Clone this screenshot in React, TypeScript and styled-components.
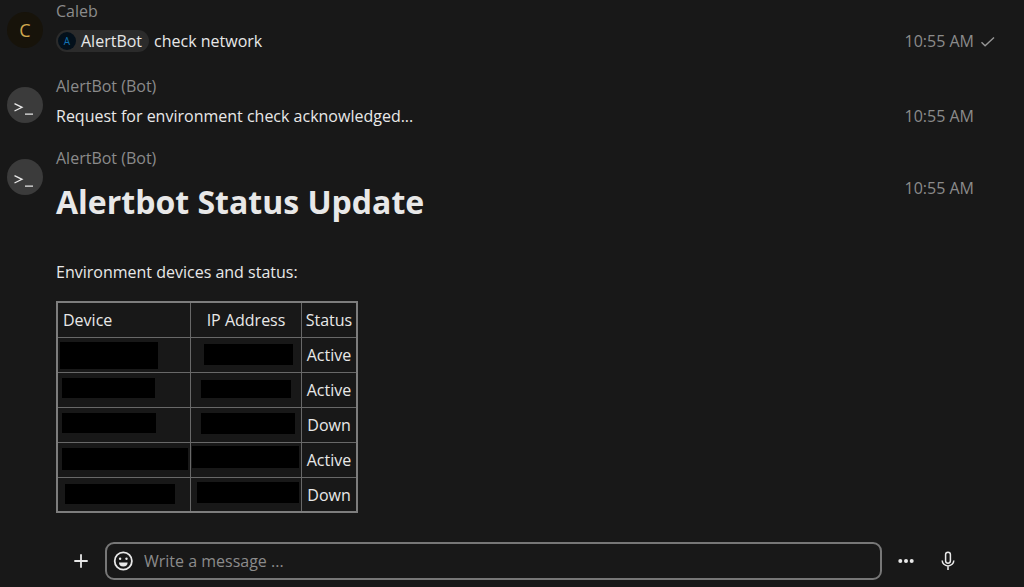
import React from 'react';
import styled, { createGlobalStyle } from 'styled-components';

const GlobalStyle = createGlobalStyle`
  *, *::before, *::after { box-sizing: border-box; }
  body {
    margin: 0;
    background: #181818;
    color: #e8e8e8;
    font-family: "Open Sans", "Noto Sans", sans-serif;
    font-size: 16px;
    line-height: 22px;
  }
`;

const Page = styled.div`
  display: flex;
  flex-direction: column;
  justify-content: space-between;
  min-height: 100vh;
`;

const Conversation = styled.main`
  display: flex;
  flex-direction: column;
  gap: 20px;
`;

const Message = styled.article`
  display: grid;
  grid-template-columns: 36px minmax(0, 1fr) auto 37px;
  column-gap: 13px;
  padding-left: 7px;
`;

const Avatar = styled.div<{ $bot?: boolean }>`
  display: grid;
  place-items: center;
  width: 36px;
  height: 36px;
  margin-top: 12px;
  border-radius: 50%;
  font-size: 18px;
  color: ${(p) => (p.$bot ? '#e8e8e8' : '#cfa94f')};
  background: ${(p) => (p.$bot ? '#3b3b3b' : '#17130a')};
`;

const Content = styled.div`
  display: flex;
  flex-direction: column;
  gap: 8px;
`;

const Sender = styled.div`
  color: #8b8b8b;
`;

const Text = styled.p`
  margin: 0;
`;

const MentionText = styled(Text)`
  display: flex;
  align-items: center;
  gap: 5px;
  padding-bottom: 3px;
`;

const Mention = styled.span`
  display: flex;
  align-items: center;
  gap: 5px;
  height: 22px;
  padding: 0 7px 0 2px;
  border-radius: 11px;
  background: #2b2b2b;
`;

const MentionBadge = styled.span`
  display: grid;
  place-items: center;
  width: 18px;
  height: 18px;
  border-radius: 50%;
  background: #03101b;
  color: #1172b4;
  font-size: 10px;
  line-height: 18px;
`;

const Time = styled.time`
  margin-top: 30px;
  color: #8b8b8b;
`;

const Delivered = styled.span`
  display: flex;
  align-items: center;
  height: 22px;
  margin: 30px 0 0 -8px;
`;

const Title = styled.h1`
  margin: 0;
  padding-top: 5px;
  font-size: 32px;
  line-height: 40px;
  font-weight: 700;
`;

const Caption = styled(Text)`
  padding: 31px 0 10px;
`;

const StatusTable = styled.table`
  align-self: flex-start;
  table-layout: fixed;
  width: 302px;
  border: 2px solid #7d7d7d;
  border-spacing: 0;
  line-height: 22px;
`;

const cell = `
  height: 35px;
  padding: 0;
  border: solid #686868;
  border-width: 0 1px 1px 0;
  font-weight: 400;
  text-align: center;
  &:last-child { border-right: 0; }
`;

const HeadCell = styled.th<{ $width?: number; $start?: boolean }>`
  ${cell}
  width: ${(p) => (p.$width ? `${p.$width}px` : 'auto')};
  && { text-align: ${(p) => (p.$start ? 'left' : 'center')}; }
  padding-left: ${(p) => (p.$start ? '5px' : '0')};
`;

const Cell = styled.td<{ $masked?: boolean }>`
  ${cell}
  vertical-align: ${(p) => (p.$masked ? 'top' : 'middle')};
  tr:last-child > & {
    height: 33px;
    border-bottom: 0;
  }
`;

const Mask = styled.div<{ $box: Box }>`
  margin: ${(p) => `${p.$box[1]}px 0 0 ${p.$box[0]}px`};
  width: ${(p) => p.$box[2]}px;
  height: ${(p) => p.$box[3]}px;
  background: #000;
`;

const Composer = styled.form`
  display: flex;
  align-items: center;
  padding: 0 64px 7px 69px;
`;

const IconButton = styled.button`
  display: grid;
  place-items: center;
  flex: none;
  width: 24px;
  height: 24px;
  padding: 0;
  border: 0;
  background: none;
  color: #e8e8e8;
`;

const Field = styled.div`
  display: flex;
  flex: 1;
  align-items: center;
  gap: 9px;
  height: 38px;
  margin: 0 12px;
  padding: 0 5px 0 4px;
  border: 2px solid #777;
  border-radius: 9px;
`;

const MessageInput = styled.input`
  flex: 1;
  min-width: 0;
  padding: 0;
  border: 0;
  outline: 0;
  background: none;
  color: inherit;
  font: inherit;
  &::placeholder { color: #8b8b8b; opacity: 1; }
`;

const Actions = styled.div`
  display: flex;
  gap: 18px;
`;

/* left, top, width and height of the mask inside its cell */
type Box = [number, number, number, number];

const devices: { device: Box; ip: Box; status: string }[] = [
  { device: [2, 4, 98, 27], ip: [13, 6, 89, 21], status: 'Active' },
  { device: [4, 5, 93, 20], ip: [10, 7, 90, 18], status: 'Active' },
  { device: [4, 5, 94, 20], ip: [10, 5, 94, 21], status: 'Down' },
  { device: [4, 5, 126, 22], ip: [1, 3, 107, 22], status: 'Active' },
  { device: [7, 6, 110, 20], ip: [6, 4, 102, 21], status: 'Down' },
];

const BotAvatar = () => (
  <Avatar $bot aria-label="AlertBot">
    <svg width="36" height="36" viewBox="0 0 36 36" fill="none" stroke="currentColor" strokeWidth="1.3">
      <path d="M7.5 16.7 15 20.3 7.5 24M18 27.2h8" />
    </svg>
  </Avatar>
);

export default function App() {
  return (
    <Page>
      <GlobalStyle />
      <Conversation>
        <Message>
          <Avatar>C</Avatar>
          <Content>
            <Sender>Caleb</Sender>
            <MentionText as="div">
              <Mention>
                <MentionBadge>A</MentionBadge>
                AlertBot
              </Mention>
              <span>check network</span>
            </MentionText>
          </Content>
          <Time>10:55 AM</Time>
          <Delivered aria-label="Delivered">
            <svg width="16" height="16" viewBox="0 0 16 16" fill="none" stroke="#969696" strokeWidth="1.4">
              <path d="m2.5 9.2 3.6 3.6L15 4.4" />
            </svg>
          </Delivered>
        </Message>

        <Message>
          <BotAvatar />
          <Content>
            <Sender>AlertBot (Bot)</Sender>
            <Text>Request for environment check acknowledged...</Text>
          </Content>
          <Time>10:55 AM</Time>
        </Message>

        <Message>
          <BotAvatar />
          <Content>
            <Sender>AlertBot (Bot)</Sender>
            <Title>Alertbot Status Update</Title>
            <Caption>Environment devices and status:</Caption>
            <StatusTable>
              <thead>
                <tr>
                  <HeadCell scope="col" $width={133} $start>Device</HeadCell>
                  <HeadCell scope="col" $width={111}>IP Address</HeadCell>
                  <HeadCell scope="col">Status</HeadCell>
                </tr>
              </thead>
              <tbody>
                {devices.map((row, i) => (
                  <tr key={i}>
                    <Cell $masked><Mask $box={row.device} /></Cell>
                    <Cell $masked><Mask $box={row.ip} /></Cell>
                    <Cell>{row.status}</Cell>
                  </tr>
                ))}
              </tbody>
            </StatusTable>
          </Content>
          <Time>10:55 AM</Time>
        </Message>
      </Conversation>

      <Composer onSubmit={(e) => e.preventDefault()}>
        <IconButton type="button" aria-label="Add">
          <svg width="24" height="24" viewBox="0 0 24 24" stroke="currentColor" strokeWidth="1.8">
            <path d="M12 5.3v13.4M5.3 12h13.4" />
          </svg>
        </IconButton>
        <Field>
          <IconButton type="button" aria-label="Emoji">
            <svg width="22" height="22" viewBox="0 0 22 22" fill="none" stroke="currentColor" strokeWidth="1.8">
              <circle cx="11.3" cy="11" r="8.6" />
              <circle cx="8.1" cy="8.8" r="1.2" fill="currentColor" stroke="none" />
              <circle cx="14.5" cy="8.8" r="1.2" fill="currentColor" stroke="none" />
              <path d="M7 12.5h8.6a4.3 3.9 0 0 1-8.6 0Z" fill="currentColor" stroke="none" />
            </svg>
          </IconButton>
          <MessageInput type="text" aria-label="Message" placeholder="Write a message ..." />
        </Field>
        <Actions>
          <IconButton type="button" aria-label="More options">
            <svg width="24" height="24" viewBox="0 0 24 24" fill="currentColor">
              <circle cx="6.3" cy="12" r="2" />
              <circle cx="12" cy="12" r="2" />
              <circle cx="17.7" cy="12" r="2" />
            </svg>
          </IconButton>
          <IconButton type="button" aria-label="Record audio">
            <svg width="24" height="24" viewBox="0 0 24 24" fill="none" stroke="currentColor" strokeWidth="1.5">
              <rect x="9.6" y="3.2" width="4.8" height="11" rx="2.4" />
              <path d="M6.2 11.5a5.8 5.4 0 0 0 11.6 0M12 17v4" />
            </svg>
          </IconButton>
        </Actions>
      </Composer>
    </Page>
  );
}
